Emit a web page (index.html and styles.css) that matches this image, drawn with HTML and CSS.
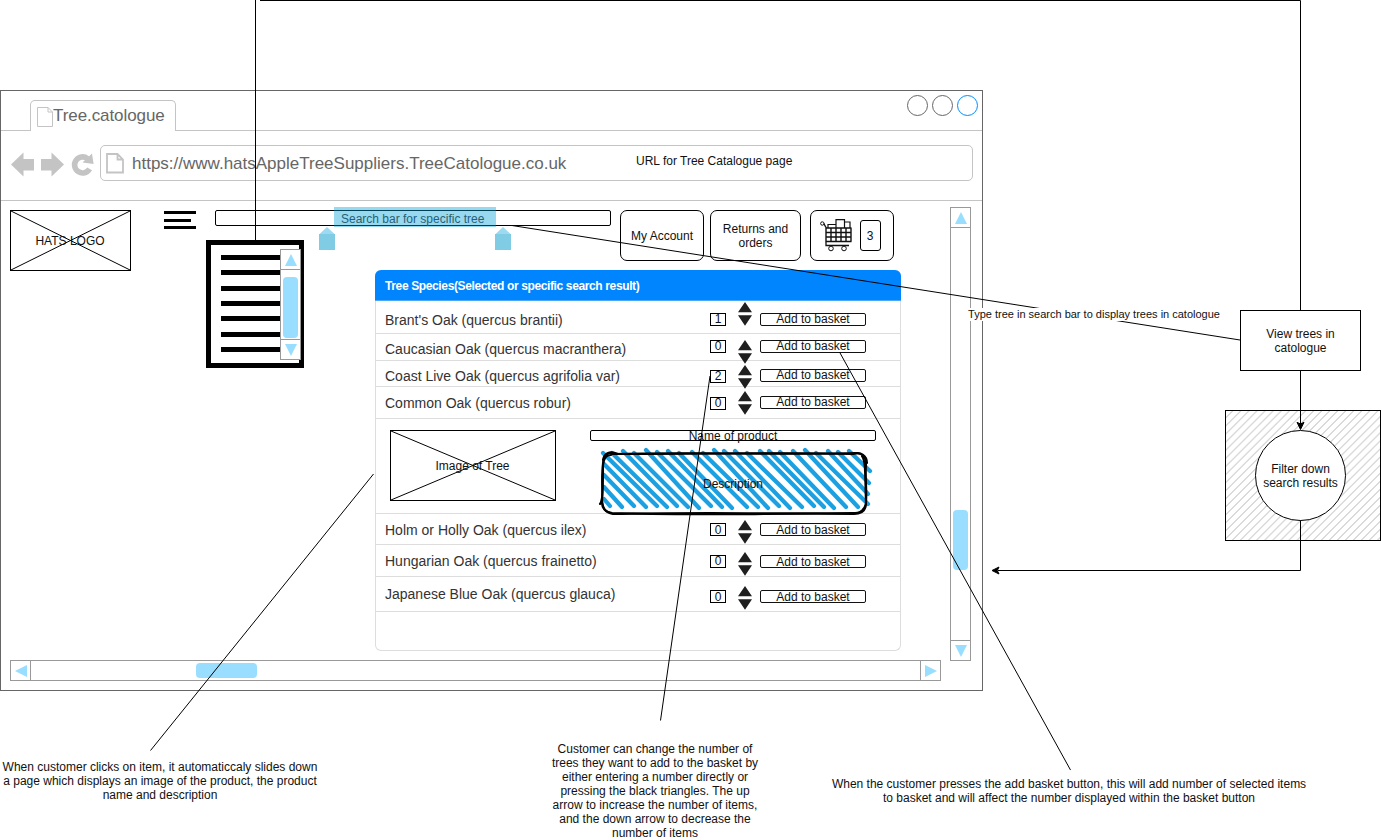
FILE: index.html
```html
<!DOCTYPE html>
<html lang="en">
<head>
<meta charset="utf-8">
<title>Tree catalogue wireframe</title>
<link rel="stylesheet" href="styles.css">
</head>
<body>
<svg class="defs" width="0" height="0" aria-hidden="true">
  <defs>
    <symbol id="spin" viewBox="0 0 14 24"><path d="M7 0L14 10.3H0zM0 13.2H14L7 23.8z" fill="#1f1f1f"/></symbol>
    <symbol id="tri" viewBox="0 0 12 12"><path d="M6 0L12 12H0z" fill="#99ddff"/></symbol>
    <symbol id="page" viewBox="0 0 16 20"><path d="M.5 .5H11L15.500 5V19.500H.5zM11 .5V5H15.500" fill="#fff" stroke="#c4c4c4"/></symbol>
  </defs>
</svg>
<main class="canvas">
  <section class="window">
    <div class="tabs">
      <div class="tab"><svg class="tab-page"><use href="#page"/></svg><span>Tree.catologue</span></div>
      <div class="controls"><i></i><i></i><i class="active"></i></div>
    </div>
    <div class="address">
      <svg class="nav" viewBox="0 0 84 26">
        <path d="M0 12.500L12.500 .5V7H23V18.500H12.500V24.500zM53 12.500L40.500 .5V7H30V18.500H40.500V24.500z" fill="#c4c4c4"/>
        <path d="M76.500 6.600A8 8 0 1 0 78.600 16.800" fill="none" stroke="#c4c4c4" stroke-width="5.600"/>
        <path d="M81 1.500L82.600 12L71.500 10.500z" fill="#c4c4c4"/>
      </svg>
      <div class="urlbar">
        <svg class="url-page" viewBox="0 0 18 21"><path d="M1 1H11.500L17 6.500V19.500H1zM11.500 1V6.500H17" fill="#fff" stroke="#c4c4c4" stroke-width="1.800"/></svg>
        <span class="url">https://www.hatsAppleTreeSuppliers.TreeCatologue.co.uk</span>
        <span class="note">URL for Tree Catalogue page</span>
      </div>
    </div>
    <div class="content">
      <div class="page">
        <div class="placeholder logo"><svg preserveAspectRatio="none" viewBox="0 0 100 100"><path d="M0 0L100 100M0 100L100 0"/></svg><span>HATS LOGO</span></div>
        <div class="shop">
          <div class="toolbar">
            <div class="burger"><i></i><i></i><i></i></div>
            <div class="search">
              <div class="selection"><span>Search bar for specific tree</span></div>
              <svg class="handle start" viewBox="0 0 16 23"><path d="M0 7.500L8 0L16 7.500z" fill="#9bdaf1"/><path d="M0 7H16V23H0z" fill="#80cce4"/></svg>
              <svg class="handle end" viewBox="0 0 16 23"><path d="M0 7.500L8 0L16 7.500z" fill="#9bdaf1"/><path d="M0 7H16V23H0z" fill="#80cce4"/></svg>
            </div>
            <div class="pill account">My Account</div>
            <div class="pill returns">Returns and<br>orders</div>
            <div class="pill basket">
              <svg class="cart" viewBox="0 0 34 34" fill="none" stroke="#111">
                <circle cx="2.300" cy="4.500" r="1.700"/>
                <path d="M3.800 4.500L6 8.500M5.500 9H31.500M6 9V22.500M5.500 13.500H31.500M5.500 18H31.500M11 9V22.500M16 9V22.500M21 9V22.500M26 9V22.500M31 9V22.500M5.500 22.500H31.500" stroke-width="1.400"/>
                <path d="M6 22.500V26.500H29" stroke-width="1.300"/>
                <path d="M8 9V5.500H16M16 9V.7H24.500V9M24.500 3H30V9" stroke-width="1.200"/>
                <circle cx="11" cy="29.500" r="2.300" fill="#fff"/><circle cx="24" cy="29.500" r="2.300" fill="#fff"/>
              </svg>
              <span class="count">3</span>
            </div>
          </div>
          <div class="table">
            <div class="thead">Tree Species(Selected or specific search result)</div>
            <div class="row brant"><span class="name">Brant's Oak (quercus brantii)</span><span class="qty">1</span><svg class="spin"><use href="#spin"/></svg><span class="add">Add to basket</span></div>
            <div class="row caucasian"><span class="name">Caucasian Oak (quercus macranthera)</span><span class="qty">0</span><svg class="spin"><use href="#spin"/></svg><span class="add">Add to basket</span></div>
            <div class="row coast"><span class="name">Coast Live Oak (quercus agrifolia var)</span><span class="qty">2</span><svg class="spin"><use href="#spin"/></svg><span class="add">Add to basket</span></div>
            <div class="row common"><span class="name">Common Oak (quercus robur)</span><span class="qty">0</span><svg class="spin"><use href="#spin"/></svg><span class="add">Add to basket</span></div>
            <div class="detail">
              <div class="placeholder photo"><svg preserveAspectRatio="none" viewBox="0 0 100 100"><path d="M0 0L100 100M0 100L100 0"/></svg><span>Image of Tree</span></div>
              <div class="info">
                <div class="product">Name of product</div>
                <div class="description">
                  <svg viewBox="0 0 280 72">
                    <g fill="none" stroke="#1ba1e2" stroke-width="4.200" stroke-linecap="round">
                      <path d="M4 52L10 59M4 40L22 60M4 28L34 59M4 17L46 60M3 6L57 59M12 6L67 60M23 4L77 59M34 6L88 60M46 3L99 61M57 5L111 59M68 4L122 60M79 6L132 61M92 5L147 60M103 6L158 60M114 3L168 61M124 4L179 59M135 4L190 61M147 6L202 60M160 4L214 59M169 4L224 60M180 5L234 61M193 4L246 60M205 3L258 60M216 6L268 57M228 4L268 47M238 5L269 36M249 4L270 24"/>
                    </g>
                    <g fill="none" stroke="#000" stroke-width="2.100" stroke-linecap="round" stroke-linejoin="round">
                      <path d="M12 7C90 5 170 8 255 6C263 6 266 10 266 18C265 30 267 42 266 56C266 63 262 67 254 67C170 66 90 69 12 66C5 65 2 62 2 55C3 44 1 32 3 17C3 9 7 5 14 6"/>
                      <path d="M3 13C4 7 9 3 18 7C100 7 175 5 253 7C261 4 267 9 267 16M262 9C266 14 265 30 266 57C264 63 260 67 253 66C170 67 90 65 13 67C5 65 3 62 2 54M0 57C3 53 3 40 3 18C4 11 6 8 11 8"/>
                    </g>
                  </svg>
                  <span>Description</span>
                </div>
              </div>
            </div>
            <div class="row holm"><span class="name">Holm or Holly Oak (quercus ilex)</span><span class="qty">0</span><svg class="spin"><use href="#spin"/></svg><span class="add">Add to basket</span></div>
            <div class="row hungarian"><span class="name">Hungarian Oak (quercus frainetto)</span><span class="qty">0</span><svg class="spin"><use href="#spin"/></svg><span class="add">Add to basket</span></div>
            <div class="row japanese"><span class="name">Japanese Blue Oak (quercus glauca)</span><span class="qty">0</span><svg class="spin"><use href="#spin"/></svg><span class="add">Add to basket</span></div>
          </div>
        </div>
        <div class="vscroll page-scroll"><b><svg class="up"><use href="#tri"/></svg></b><em><i></i></em><b><svg class="down"><use href="#tri"/></svg></b></div>
      </div>
      <div class="hscroll"><b><svg class="left"><use href="#tri"/></svg></b><em><i></i></em><b><svg class="right"><use href="#tri"/></svg></b></div>
      <div class="menu">
        <div class="lines"><i></i><i></i><i></i><i></i><i></i><i></i><i></i></div>
        <div class="vscroll"><b><svg class="up"><use href="#tri"/></svg></b><em><i></i></em><b><svg class="down"><use href="#tri"/></svg></b></div>
      </div>
    </div>
  </section>

  <div class="node view">View trees in<br>catologue</div>
  <div class="node hatch"><div class="filter">Filter down<br>search results</div></div>

  <svg class="links" viewBox="0 0 1381 840" fill="none" stroke="#000">
    <path d="M255.500 240V0M260 .5H1300.500V310M1300.500 371V424M1300.500 520.500V570.500H998"/>
    <path d="M1300.500 429.500L1297 422.300L1300.500 424L1304 422.300zM992 570.500L999 567L997.300 570.500L999 574z" fill="#000"/>
    <path d="M512 225.500L1240 340M839.500 352L1070.500 770M710 376L660.500 720.500M373.500 474L150.500 750.500"/>
  </svg>

  <p class="node label type">Type tree in search bar to display trees in catologue</p>
  <p class="node label click">When customer clicks on item, it automaticcaly slides down<br>a page which displays an image of the product, the product<br>name and description</p>
  <p class="node label change">Customer can change the number of<br>trees they want to add to the basket by<br>either entering a number directly or<br>pressing the black triangles. The up<br>arrow to increase the number of items,<br>and the down arrow to decrease the<br>number of items</p>
  <p class="node label press">When the customer presses the add basket button, this will add number of selected items<br>to basket and will affect the number displayed within the basket button</p>
</main>
</body>
</html>
```

FILE: styles.css
```css
* { box-sizing: border-box; }
body {
  margin: 0;
  background: #fff;
  color: #111;
  font: 12px/14px "Liberation Sans", Arial, sans-serif;
}
i, em, b { display: block; font-style: normal; }
svg { display: block; overflow: visible; }
.defs { position: absolute; }
.canvas { position: relative; width: 1381px; height: 840px; overflow: hidden; }

/* Browser window */
.window {
  position: absolute; left: 0; top: 90px; width: 983px; height: 601px;
  border: 1px solid #666; display: flex; flex-direction: column;
}
.tabs {
  height: 40px; flex: none; border-bottom: 1px solid #c4c4c4;
  display: flex; justify-content: space-between; align-items: flex-start;
  padding: 4px 4px 0 29px;
}
.tab {
  width: 146px; height: 31px; margin-top: 5px;
  border: 1px solid #c4c4c4; border-bottom: 0; border-radius: 5px 5px 0 0;
  background: #fff; display: flex; padding: 6px 0 0 6px;
  font-size: 17px; line-height: 18px; letter-spacing: -.08px; color: #666;
}
.tab-page { width: 16px; height: 20px; flex: none; }
.controls { display: flex; gap: 4px; }
.controls i { width: 21px; height: 21px; border: 1px solid #666; border-radius: 50%; }
.controls .active { border-color: #008cff; }
.address {
  height: 70px; flex: none; border-bottom: 1px solid #c4c4c4;
  display: flex; padding: 14px 9px 0 10px;
}
.nav { width: 84px; height: 26px; margin: 7px 5px 0 0; flex: none; }
.urlbar {
  flex: 1; height: 36px; border: 1px solid #c4c4c4; border-radius: 5px;
  display: flex; padding-left: 5px;
}
.url-page { width: 18px; height: 21px; margin: 7px 8px 0 0; }
.url { font-size: 17px; line-height: 36px; color: #666; width: 504px; white-space: nowrap; }
.note { line-height: 30px; }

/* Page content */
.content { position: relative; flex: 1; padding-left: 9px; }
.page { display: flex; height: 459px; padding-top: 6px; }
.placeholder { display: grid; place-items: center; border: 1px solid #000; flex: none; }
.placeholder svg, .placeholder span { grid-area: 1 / 1; }
.placeholder svg { width: 100%; height: 100%; min-height: 0; }
.placeholder path { fill: none; stroke: #000; vector-effect: non-scaling-stroke; }
.placeholder span { margin-right: 1px; }
.logo { width: 121px; height: 61px; margin-top: 3px; }
.shop { width: 770px; margin: 3px 0 0 33px; }
.toolbar { display: flex; align-items: flex-start; height: 60px; }
.burger { width: 32px; padding-top: 1px; margin-right: 19px; }
.burger i { height: 3px; margin-bottom: 4.5px; background: #000; }
.burger i:nth-child(2) { width: 27px; }
.search {
  position: relative; width: 396px; height: 16px; margin-right: 9px;
  border: 1px solid #000; border-radius: 2px;
}
.selection {
  position: absolute; left: 118px; top: -4px; width: 162px; height: 20px;
  padding-left: 7px; line-height: 24px; background: rgba(0, 160, 215, .4); color: #265f78;
}
.handle { position: absolute; top: 16px; width: 16px; height: 23px; }
.start { left: 103px; }
.end { left: 279px; }
.pill {
  height: 51px; border: 1px solid #000; border-radius: 7px;
  display: flex; align-items: center; justify-content: center; text-align: center;
}
.account { width: 84px; margin-right: 6px; }
.returns { width: 91px; margin-right: 9px; }
.basket { width: 84px; gap: 6px; padding-right: 4px; }
.cart { width: 34px; height: 34px; }
.count { width: 21px; height: 31px; border: 1px solid #000; border-radius: 3px; line-height: 30px; }

/* Species table */
.table {
  width: 526px; height: 381px; margin-left: 211px;
  border: 1px solid #ddd; border-top: 0; border-radius: 6px;
}
.thead {
  height: 31px; margin: 0 -1px; padding-left: 10px; border-radius: 6px 6px 0 0;
  border-bottom: 1px solid #4aa8ff; background: #0085ff;
  color: #fff; font-weight: bold; line-height: 32px; letter-spacing: -.37px;
}
.row {
  display: grid; grid-template-columns: 325px 28px 22px 106px; align-items: start;
  height: var(--h); padding-left: 9px; border-bottom: 1px solid #ddd;
}
.name { margin-top: var(--name); font-size: 14px; line-height: 16px; color: #333; white-space: nowrap; }
.qty {
  width: 16px; height: 13px; margin-top: var(--qty);
  border: 1px solid #000; line-height: 12px; text-align: center;
}
.spin { width: 14px; height: 24px; margin-top: var(--spin); }
.add {
  height: 13px; margin-top: var(--add); border: 1px solid #111; border-radius: 2px;
  line-height: 12px; text-align: center;
}
.brant .qty, .caucasian .qty, .coast .qty, .common .qty, .hungarian .qty,
.brant .add, .caucasian .add, .coast .add, .common .add { line-height: 10px; }
.brant { --h: 33px; --name: 11px; --qty: 12px; --spin: 1px; --add: 12px; }
.caucasian { --h: 27px; --name: 7px; --qty: 6px; --spin: 6px; --add: 6px; }
.coast { --h: 26px; --name: 7px; --qty: 9px; --spin: 4px; --add: 8px; }
.common { --h: 32px; --name: 8px; --qty: 10px; --spin: 4px; --add: 9px; }
.holm { --h: 31px; --name: 8px; --qty: 9px; --spin: 6px; --add: 9px; }
.hungarian { --h: 32px; --name: 8px; --qty: 10px; --spin: 7px; --add: 10px; }
.japanese { --h: 35px; --name: 9px; --qty: 13px; --spin: 9px; --add: 13px; }
.detail { display: flex; height: 95px; padding: 11px 0 0 14px; border-bottom: 1px solid #ddd; }
.photo { width: 166px; height: 71px; margin-right: 34px; }
.product {
  width: 286px; height: 11px; border: 1px solid #000; border-radius: 2px;
  line-height: 10px; text-align: center;
}
.description { display: grid; grid-template-columns: 266px; justify-items: center; width: 266px; margin: 6px 0 0 10px; }
.description svg { grid-area: 1 / 1; width: 280px; height: 72px; justify-self: start; }
.description span { grid-area: 1 / 1; margin-top: 30px; }

/* Scrollbars */
.vscroll { width: 21px; display: flex; flex-direction: column; border: 1px solid #999; background: #fff; }
.vscroll b, .hscroll b { width: 19px; height: 19px; flex: none; display: grid; place-items: center; }
.vscroll em, .hscroll em { flex: 1; }
.vscroll em { border: solid #999; border-width: 1px 0; }
.hscroll em { border: solid #999; border-width: 0 1px; }
.vscroll i, .hscroll i { background: #99ddff; border-radius: 4px; }
.vscroll b svg, .hscroll b svg { width: 12px; height: 12px; }
.down { transform: rotate(180deg); }
.left { transform: rotate(-90deg); }
.right { transform: rotate(90deg); }
.page-scroll { height: 454px; margin-left: 16px; }
.page-scroll i { width: 15px; height: 60px; margin: 282px 0 0 2px; }
.hscroll { width: 931px; height: 21px; display: flex; border: 1px solid #999; }
.hscroll i { width: 61px; height: 15px; margin: 2px 0 0 165px; }

/* Open menu below the burger button */
.menu {
  position: absolute; left: 205px; top: 39px; width: 98px; height: 128px;
  border: 5px solid #000; background: #fff; display: flex; padding: 4px 0 0 10px;
}
.lines { width: 59px; flex: none; padding-top: 6px; }
.lines i { height: 5px; margin-bottom: 10.34px; background: #000; }
.menu .vscroll { height: 111px; flex: none; }
.menu .vscroll i { width: 15px; height: 61px; margin: 7px 0 0 2px; }

/* Flow diagram */
.node { position: absolute; margin: 0; text-align: center; }
.view {
  left: 1240px; top: 310px; width: 121px; height: 61px; border: 1px solid #000;
  background: #fff; padding-top: 16px;
}
.hatch {
  left: 1225px; top: 410px; width: 156px; height: 131px; border: 1px solid #000;
  display: grid; place-items: center; padding-right: 5px;
  background: repeating-linear-gradient(135deg, #fff 0, #fff 3.800px, #dadada 4.300px, #dadada 5.200px, #fff 5.700px);
}
.filter {
  width: 91px; height: 91px; border: 1px solid #000; border-radius: 50%;
  background: #fff; padding-top: 31px; white-space: nowrap;
}
.links { position: absolute; left: 0; top: 0; width: 1381px; height: 840px; pointer-events: none; }
.label { white-space: nowrap; }
.type { left: 967px; top: 308px; width: 254px; font-size: 11px; line-height: 13px; background: #fff; }
.click { left: 0; top: 760px; width: 320px; }
.change { left: 545px; top: 742px; width: 220px; }
.press { left: 829px; top: 777px; width: 480px; }
```
